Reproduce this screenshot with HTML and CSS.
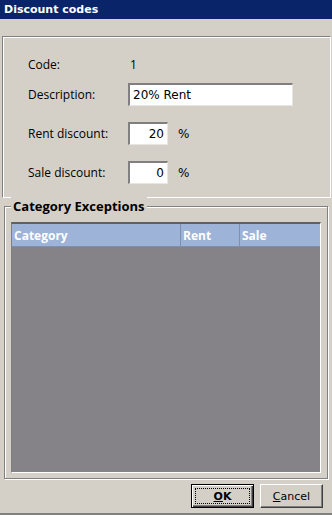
FILE: index.html
```html
<!DOCTYPE html>
<html>
<head>
<meta charset="utf-8">
<link rel="stylesheet" href="styles.css">
</head>
<body>
<div class="window">
  <div class="titlebar">Discount codes</div>
  <div class="panel">
    <div class="row row-code">
      <span class="label">Code:</span>
      <span class="value">1</span>
    </div>
    <div class="row">
      <span class="label">Description:</span>
      <div class="input input-wide">20% Rent</div>
    </div>
    <div class="row">
      <span class="label">Rent discount:</span>
      <div class="input input-num">20</div>
      <span class="pct">%</span>
    </div>
    <div class="row">
      <span class="label">Sale discount:</span>
      <div class="input input-num">0</div>
      <span class="pct">%</span>
    </div>
  </div>
  <div class="group">
    <div class="group-caption">Category Exceptions</div>
    <div class="grid">
      <div class="grid-head">
        <div class="col col-cat">Category</div>
        <div class="col col-rent">Rent</div>
        <div class="col col-sale">Sale</div>
      </div>
      <div class="grid-body"></div>
    </div>
  </div>
  <div class="buttons">
    <button class="btn btn-default"><span class="focus"><u>O</u>K</span></button>
    <button class="btn"><u>C</u>ancel</button>
  </div>
</div>
</body>
</html>
```
FILE: styles.css
```css
html, body {
  margin: 0;
  padding: 0;
}
body {
  width: 332px;
  height: 515px;
  overflow: hidden;
  background: #d4d0c8;
  font-family: "Open Sans", "DejaVu Sans", sans-serif;
  font-size: 12px;
  color: #000;
}
.window {
  width: 332px;
  height: 515px;
  display: flex;
  flex-direction: column;
  box-sizing: border-box;
  border-bottom: 2px solid #808080;
}
.titlebar {
  height: 19px;
  background: #0a246a;
  color: #fff;
  font-family: "DejaVu Sans", sans-serif;
  font-weight: bold;
  font-size: 11px;
  line-height: 19px;
  padding-left: 4px;
}
.panel {
  margin: 17px 1px 0 2px;
  height: 162px;
  border-top: 1px solid #808080;
  border-left: 1px solid #808080;
  border-right: 1px solid #fff;
  border-bottom: 1px solid #fff;
  box-shadow: inset 1px 1px 0 #fff;
  padding: 19px 0 0 25px;
  box-sizing: border-box;
  display: flex;
  flex-direction: column;
}
.row {
  display: flex;
  align-items: center;
  height: 23px;
  margin-bottom: 16px;
}
.row-code {
  height: 20px;
  margin-bottom: 10px;
}
.label {
  width: 100px;
}
.value {
  padding-left: 2px;
}
.input {
  height: 23px;
  box-sizing: border-box;
  background: #fff;
  border-top: 2px solid #808080;
  border-left: 2px solid #808080;
  border-right: 1px solid #e8e6e0;
  border-bottom: 1px solid #e8e6e0;
  display: flex;
  align-items: center;
  padding: 0 3px;
  font-family: "DejaVu Sans", sans-serif;
}
.input-wide {
  width: 165px;
  font-size: 12px;
}
.input-num {
  width: 40px;
  justify-content: flex-end;
  font-size: 12px;
}
.pct {
  margin-left: 10px;
  font-family: "DejaVu Sans", sans-serif;
}
.group {
  margin: 8px 4px 0 4px;
  height: 273px;
  border: 1px solid #808080;
  box-shadow: inset 1px 1px 0 #fff, 1px 1px 0 #fff;
  position: relative;
  padding: 15px 6px 5px 6px;
  box-sizing: border-box;
  display: flex;
  flex-direction: column;
}
.group-caption {
  position: absolute;
  top: -10px;
  left: 6px;
  background: #d4d0c8;
  padding: 0 2px;
  font-weight: bold;
  font-size: 13px;
}
.grid {
  flex: 1;
  display: flex;
  flex-direction: column;
  border-top: 2px solid #606060;
  border-left: 1px solid #808080;
  border-right: 1px solid #fff;
  border-bottom: 1px solid #fff;
}
.grid-head {
  display: flex;
  height: 22px;
  background: #9db3d7;
  color: #fff;
  font-weight: bold;
  font-size: 12px;
  border-bottom: 1px solid #7f90ae;
}
.col {
  display: flex;
  align-items: center;
  padding-left: 2px;
  border-right: 1px solid #7f90ae;
}
.col-cat { width: 166px; }
.col-rent { width: 56px; }
.col-sale { flex: 1; border-right: none; }
.grid-body {
  flex: 1;
  background: #858387;
}
.buttons {
  display: flex;
  justify-content: flex-end;
  gap: 6px;
  padding: 5px 9px 0 0;
}
.btn {
  width: 63px;
  height: 24px;
  background: #d4d0c8;
  font-family: "DejaVu Sans", sans-serif;
  font-size: 11px;
  color: #000;
  border-top: 1px solid #fff;
  border-left: 1px solid #fff;
  border-right: 1px solid #404040;
  border-bottom: 1px solid #404040;
  box-shadow: inset -1px -1px 0 #808080;
  padding: 0;
}
.btn-default {
  border: 1px solid #000;
  box-shadow: inset 1px 1px 0 #fff, inset -1px -1px 0 #404040, inset -2px -2px 0 #808080;
  font-weight: bold;
  padding: 3px;
}
.focus {
  display: flex;
  align-items: center;
  justify-content: center;
  height: 100%;
  border: 1px dotted #000;
  box-sizing: border-box;
}
```
